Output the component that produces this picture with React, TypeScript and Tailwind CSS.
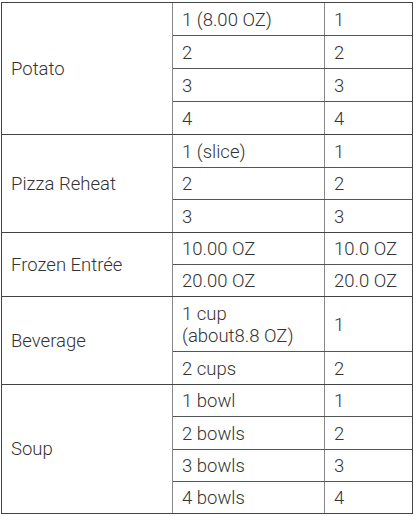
import React from "react";

type Row = { a: React.ReactNode; b: string; h: number };
type Group = { name: string; rows: Row[] };

const groups: Group[] = [
  {
    name: "Potato",
    rows: [
      { a: "1 (8.00 OZ)", b: "1", h: 32 },
      { a: "2", b: "2", h: 32 },
      { a: "3", b: "3", h: 32 },
      { a: "4", b: "4", h: 32 },
    ],
  },
  {
    name: "Pizza Reheat",
    rows: [
      { a: "1 (slice)", b: "1", h: 32 },
      { a: "2", b: "2", h: 31 },
      { a: "3", b: "3", h: 32 },
    ],
  },
  {
    name: "Frozen Entrée",
    rows: [
      { a: "10.00 OZ", b: "10.0 OZ", h: 31 },
      { a: "20.00 OZ", b: "20.0 OZ", h: 31 },
    ],
  },
  {
    name: "Beverage",
    rows: [
      {
        a: (
          <>
            1 cup
            <br />
            (about8.8 OZ)
          </>
        ),
        b: "1",
        h: 54,
      },
      { a: "2 cups", b: "2", h: 32 },
    ],
  },
  {
    name: "Soup",
    rows: [
      { a: "1 bowl", b: "1", h: 31 },
      { a: "2 bowls", b: "2", h: 32 },
      { a: "3 bowls", b: "3", h: 31 },
      { a: "4 bowls", b: "4", h: 31 },
    ],
  },
];

export default function App() {
  return (
    <div className="w-[414px] h-[516px] bg-white overflow-hidden">
      <div
        className="ml-[1px] mt-[2px] w-[412px] border border-[#444] flex flex-col text-[#333] font-light text-[18.5px] leading-[22px]"
        style={{ fontFamily: "Roboto, 'Liberation Sans', sans-serif" }}
      >
        {groups.map((g, gi) => (
          <div
            key={g.name}
            className={`flex ${gi > 0 ? "border-t border-[#444]" : ""}`}
          >
            <div className="w-[171px] shrink-0 border-r border-[#888] flex items-center pl-[9px]">
              {g.name}
            </div>
            <div className="flex-1 flex flex-col">
              {g.rows.map((r, ri) => (
                <div
                  key={ri}
                  className={`flex box-content ${ri > 0 ? "border-t border-[#555]" : ""}`}
                  style={{ height: r.h }}
                >
                  <div className="w-[152px] shrink-0 border-r border-[#888] flex items-center pl-[9px] pt-[1px]">
                    <span>{r.a}</span>
                  </div>
                  <div className="flex-1 flex items-center pl-[9px] pt-[1px]">
                    {r.b}
                  </div>
                </div>
              ))}
            </div>
          </div>
        ))}
      </div>
    </div>
  );
}
